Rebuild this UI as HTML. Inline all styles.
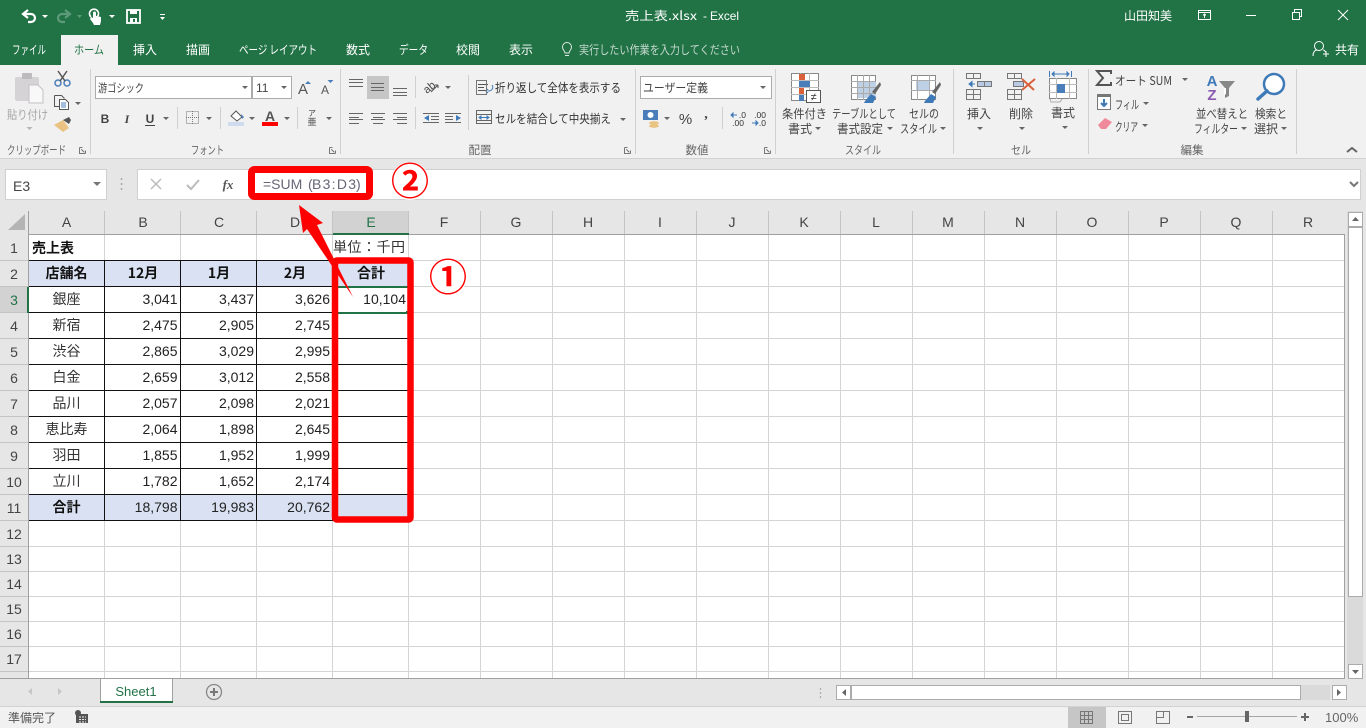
<!DOCTYPE html>
<html lang="ja"><head><meta charset="utf-8"><title>売上表.xlsx - Excel</title>
<style>
html,body{margin:0;padding:0;width:1366px;height:728px;overflow:hidden;background:#e6e6e6}
svg{display:block;position:absolute;left:0;top:0}
text{font-family:"Liberation Sans","Noto Sans CJK JP",sans-serif;font-size:12px;fill:#444}
.j{font-family:"Noto Sans CJK JP",sans-serif}
.m{text-anchor:middle}.e{text-anchor:end}
.w{fill:#fff}.s{font-size:11px}.g{fill:#666}
.c{font-size:14px;fill:#333}.n{font-size:14px;fill:#222;text-anchor:end}
.b{font-family:"Noto Sans CJK JP",sans-serif;font-size:14px;font-weight:700;fill:#111;text-anchor:middle}
.d{font-family:"Noto Sans CJK JP",sans-serif;font-size:14px;fill:#333;text-anchor:middle}
.h{font-size:14px;fill:#444;text-anchor:middle}
.ic{fill:none;stroke:#555;stroke-width:1}
.cr{shape-rendering:crispEdges}
.gl{font-size:11.500px;fill:#666;font-family:"Noto Sans CJK JP",sans-serif}
</style></head><body>
<svg width="1366" height="728" viewBox="0 0 1366 728">
<!-- title bar -->
<rect width="1366" height="65" fill="#217346"/>
<rect x="61" y="35" width="57" height="30" fill="#f1f1f1"/>
<path d="M28 10l-5 4 5 4M23 14h8a4 4 0 0 1 0 8h-3" fill="none" stroke="#fff" stroke-width="2.200"/>
<path d="M65 10l5 4-5 4M70 14h-8a4 4 0 0 0 0 8h3" fill="none" stroke="#5d9a7a" stroke-width="2.200"/>
<path d="M42 15h6l-3 3z" fill="#fff"/><path d="M77 15h5l-2.500 3z" fill="#5d9a7a"/>
<path d="M109 15h6l-3 3z" fill="#fff"/>
<path d="M93 23l-3-4 1-2 2 1v-5a1.500 1.500 0 0 1 3 0v3l5 1v4l-1 4h-6z" fill="#fff"/><path d="M91 17a4.500 4.500 0 1 1 6 0" fill="none" stroke="#fff" stroke-width="1.600"/>
<rect x="127" y="10" width="13" height="13" fill="none" stroke="#fff" stroke-width="1.800"/><rect x="130" y="10" width="7" height="4" fill="#fff"/><rect x="130" y="18" width="7" height="5" fill="#fff"/><rect x="133" y="19" width="2" height="3" fill="#217346"/>
<rect x="160" y="14" width="5" height="1" fill="#fff"/><path d="M160 17h5l-2.500 3z" fill="#fff"/>
<text x="625" y="20" class="w j" style="font-size:12px" textLength="72" lengthAdjust="spacingAndGlyphs">売上表.xlsx</text><text x="703" y="20" class="w">-</text><text x="710" y="20" class="w" textLength="29" lengthAdjust="spacingAndGlyphs">Excel</text>
<text x="1124" y="20" class="w j">山田知美</text>
<g fill="none" stroke="#fff" stroke-width="1" class="cr"><rect x="1198.500" y="10.500" width="12" height="9"/><path d="M1198 12.500h13M1204.500 18v-4M1203 15.500l1.500-1.500 1.500 1.500"/><path d="M1246 15.500h10M1292.500 12.500h7v7h-7zM1294.500 12v-2.500h7v7h-2"/></g>
<path d="M1338 10l10 10M1348 10l-10 10" stroke="#fff" stroke-width="1" fill="none"/>
<!-- tabs -->
<text x="12" y="54" class="w j" textLength="34" lengthAdjust="spacingAndGlyphs">ファイル</text>
<text x="74" y="54" class="j" style="fill:#217346" textLength="30" lengthAdjust="spacingAndGlyphs">ホーム</text>
<text x="145" y="54" class="m w j">挿入</text>
<text x="198" y="54" class="m w j">描画</text>
<text x="239" y="54" class="w j" textLength="78" lengthAdjust="spacingAndGlyphs">ページ レイアウト</text>
<text x="358" y="54" class="m w j">数式</text>
<text x="399" y="54" class="w j" textLength="29" lengthAdjust="spacingAndGlyphs">データ</text>
<text x="468" y="54" class="m w j">校閲</text>
<text x="521" y="54" class="m w j">表示</text>
<path d="M565 53c0-2-2.500-3-2.500-6a4.500 4.500 0 0 1 9 0c0 3-2.500 4-2.500 6zM565 55.500h4" fill="none" stroke="#dfe9e3" stroke-width="1"/>
<text x="579" y="54" class="j" style="fill:#c5d8cd" textLength="161" lengthAdjust="spacingAndGlyphs">実行したい作業を入力してください</text>
<circle cx="1319" cy="46" r="4.500" fill="none" stroke="#fff"/><path d="M1313 56c0-4 2-6 4-6M1323 50c1 0 2 1 2.500 2M1323 54h6M1326 51v6" fill="none" stroke="#fff"/>
<text x="1335" y="54" class="w j">共有</text>
<!-- ribbon -->
<rect y="65" width="1366" height="93" fill="#f1f1f1"/>
<rect y="158" width="1366" height="1" fill="#d2d2d2"/>
<g fill="#d0d0d0" class="cr"><rect x="90" y="69" width="1" height="85"/><rect x="340" y="69" width="1" height="85"/><rect x="635" y="69" width="1" height="85"/><rect x="775" y="69" width="1" height="85"/><rect x="953" y="69" width="1" height="85"/><rect x="1088" y="69" width="1" height="85"/><rect x="1296" y="69" width="1" height="85"/>
<rect x="177" y="107" width="1" height="22"/><rect x="220" y="107" width="1" height="22"/><rect x="297" y="107" width="1" height="22"/><rect x="415" y="76" width="1" height="22"/><rect x="415" y="107" width="1" height="22"/><rect x="468" y="75" width="1" height="55"/><rect x="722" y="107" width="1" height="22"/></g>
<!-- clipboard -->
<rect x="15" y="77" width="24" height="24" rx="2" fill="#d5d3d5"/><rect x="22" y="73" width="10" height="6" rx="1" fill="#bdbbbd"/>
<path d="M29 85h9l5 5v13H29z" fill="#f8f8f8" stroke="#c2c2c2"/>
<text x="7" y="119" class="j" style="fill:#a6a6a6" textLength="41" lengthAdjust="spacingAndGlyphs">貼り付け</text>
<path d="M26.500 127h6l-3 3z" fill="#b5b5b5"/>
<circle cx="58" cy="83" r="3" fill="none" stroke="#4a7ebb" stroke-width="1.500"/><circle cx="67" cy="83" r="3" fill="none" stroke="#4a7ebb" stroke-width="1.500"/><path d="M58 71l7 10M67 71l-7 10" stroke="#555" stroke-width="1.500"/>
<path d="M54.500 95.500h7l3 3v0M54.500 95.500v11h5" class="ic"/><path d="M59.500 99.500h6l3 3v7h-9z" fill="#fff" stroke="#555"/><path d="M61 103h5M61 105h5M61 107h5" stroke="#4a7ebb"/>
<path d="M75 102h6l-3 3z" fill="#666"/>
<path d="M54 125l9-5 6 8-6 4z" fill="#eac282"/><path d="M63 120l6-3 2 3-2 4z" fill="#555"/>
<text x="7" y="154" class="gl" textLength="59" lengthAdjust="spacingAndGlyphs">クリップボード</text>
<text x="191" y="154" class="gl" textLength="33" lengthAdjust="spacingAndGlyphs">フォント</text>
<text x="480" y="154" class="gl m">配置</text>
<text x="697" y="154" class="gl m">数値</text>
<text x="845" y="154" class="gl" textLength="36" lengthAdjust="spacingAndGlyphs">スタイル</text>
<text x="1011" y="154" class="gl" textLength="20" lengthAdjust="spacingAndGlyphs">セル</text>
<text x="1192" y="154" class="gl m">編集</text>
<g id="launch" fill="none" stroke="#777" class="cr"><path d="M79.500 147.500v6h6M79.500 147.500h3M85.500 153.500v-3M81.500 149.500l3 3"/><path d="M329.500 147.500v6h6M329.500 147.500h3M335.500 153.500v-3M331.500 149.500l3 3"/><path d="M624.500 147.500v6h6M624.500 147.500h3M630.500 153.500v-3M626.500 149.500l3 3"/><path d="M764.500 147.500v6h6M764.500 147.500h3M770.500 153.500v-3M766.500 149.500l3 3"/></g>
<path d="M1347 152l5-4 5 4" fill="none" stroke="#666" stroke-width="2"/>
<!-- font group -->
<rect x="95.500" y="76.500" width="156" height="22" fill="#fff" stroke="#ababab" class="cr"/><rect x="252.500" y="76.500" width="39" height="22" fill="#fff" stroke="#ababab" class="cr"/>
<text x="98" y="92" class="j" style="font-size:11.500px" textLength="46" lengthAdjust="spacingAndGlyphs">游ゴシック</text><text x="256" y="92" style="font-size:12px">11</text>
<path d="M242 86h6l-3 3zM281 86h6l-3 3z" fill="#666"/>
<text x="303" y="94" class="m" style="font-size:15px;fill:#555">A</text><path d="M305 84h6l-3-3z" fill="#4a7ebb"/>
<text x="325" y="94" class="m" style="font-size:12px;fill:#555">A</text><path d="M327.500 80h6l-3 3z" fill="#4a7ebb"/>
<text x="105" y="123" class="m" style="font-size:12px;font-weight:700;fill:#444">B</text>
<text x="127" y="123" class="m" style="font-size:12px;font-weight:700;font-style:italic;font-family:'Liberation Serif';fill:#444">I</text>
<text x="150" y="123" class="m" style="font-size:12px;font-weight:700;fill:#444">U</text><rect x="145" y="125" width="10" height="1" fill="#444"/>
<rect x="186.500" y="111.500" width="12" height="12" fill="none" stroke="#777" stroke-dasharray="1 1" class="cr"/><path d="M192.500 111v13M186 117.500h13" stroke="#777" stroke-dasharray="1 1" class="cr"/>
<path d="M231 116l5-5 6 6-5 4z" fill="#fff" stroke="#555"/><path d="M241 114l3 3-2 2z" fill="#4a7ebb"/><rect x="228" y="122" width="16" height="4" fill="#cfdcf0"/>
<text x="270" y="121" class="m" style="font-size:14px;font-weight:700;fill:#555">A</text><rect x="262" y="122" width="16" height="4" fill="#f00"/>
<text x="312" y="116" class="m" style="font-size:8px;fill:#444">ア</text><text x="312" y="125" class="m j" style="font-size:9px;fill:#444">亜</text>
<path d="M163 117h6l-3 3zM206 117h6l-3 3zM249 117h6l-3 3zM284 117h6l-3 3zM326 117h6l-3 3z" fill="#666"/>
<!-- alignment -->
<rect x="367" y="76" width="22" height="23" fill="#c6c6c6"/>
<path d="M349 79.500h14M349 82.500h14M349 86.500h14M371 83.500h13M371 87.500h13M371 90.500h13M393 88.500h14M393 92.500h14M393 95.500h14M349 113.500h14M349 117.500h10M349 119.500h14M349 123.500h10M371 113.500h14M373 117.500h10M371 119.500h14M373 123.500h10M393 113.500h14M397 117.500h10M393 119.500h14M397 123.500h10" stroke="#666" class="cr" fill="none"/>
<text x="429" y="91" class="m" transform="rotate(-40 429 87)" style="font-size:11px;fill:#444">ab</text><path d="M431 92l7-7M438 85v3M438 85h-3" stroke="#555" fill="none"/><path d="M445 86h6l-3 3z" fill="#666"/>
<path d="M431 116.500h8M431 119.500h8M423 113.500h16M423 122.500h16M445 113.500h16M445 122.500h16M445 116.500h8M445 119.500h8" stroke="#666" class="cr"/>
<path d="M429 115l-5 3 5 3zM429 118h-1" fill="#3f7ab8"/><path d="M456 115l5 3-5 3z" fill="#3f7ab8"/>
<path d="M478 84.500h10M478 87.500h6M478 90.500h8" stroke="#555"/><path d="M492 85c2 3 0 6-4 6M488 89l-2 2 2 2" stroke="#3f7ab8" fill="none"/><rect x="476.500" y="80.500" width="10" height="14" fill="none" stroke="#777"/>
<text x="495" y="92" class="j" textLength="126" lengthAdjust="spacingAndGlyphs" style="fill:#333">折り返して全体を表示する</text>
<rect x="476.500" y="110.500" width="15" height="13" fill="none" stroke="#666"/><path d="M476 114.500h16M476 120.500h16" stroke="#666"/><path d="M479 117.500h10M479 117.500l2-1.500v3zM489 117.500l-2-1.500v3z" stroke="#3f7ab8" fill="#3f7ab8"/>
<text x="495" y="123" class="j" textLength="116" lengthAdjust="spacingAndGlyphs" style="fill:#333">セルを結合して中央揃え</text>
<path d="M620 118h6l-3 3z" fill="#666"/>
<!-- number -->
<rect x="640.500" y="76.500" width="131" height="22" fill="#fff" stroke="#ababab" class="cr"/>
<text x="643" y="92" class="j" textLength="65" lengthAdjust="spacingAndGlyphs">ユーザー定義</text>
<path d="M760 86h6l-3 3z" fill="#666"/>
<rect x="643" y="110" width="15" height="10" fill="#4a7ebb"/><circle cx="650.500" cy="115" r="3" fill="#fff"/><ellipse cx="654" cy="123" rx="5" ry="1.800" fill="#eac282"/><ellipse cx="654" cy="126" rx="5" ry="1.800" fill="#eac282"/>
<path d="M664 117h6l-3 3z" fill="#666"/>
<text x="685.500" y="124" class="m" style="font-size:15px;fill:#444">%</text>
<text x="706" y="118" class="m" style="font-size:14px;font-weight:700;font-family:'Liberation Serif';fill:#444">,</text>
<text x="746" y="118" class="e" style="font-size:8.500px;fill:#333">.0</text><text x="744" y="126" class="e" style="font-size:8.500px;fill:#333">.00</text><path d="M731 115h6M731 115l2-2v4z" stroke="#3f7ab8" fill="#3f7ab8"/>
<text x="766" y="118" class="e" style="font-size:8.500px;fill:#333">.00</text><text x="766" y="126" class="e" style="font-size:8.500px;fill:#333">.0</text><path d="M752 123h6M758 123l-2-2v4z" stroke="#3f7ab8" fill="#3f7ab8"/>
<!-- styles -->
<rect x="791.500" y="73.500" width="27" height="27" fill="#fff" stroke="#888" class="cr"/>
<path d="M800.500 73v28M809.500 73v28M791 80.500h28M791 87.500h28M791 94.500h28" stroke="#bbb" class="cr"/>
<rect x="799" y="74" width="6" height="6" fill="#d9603b"/><rect x="799" y="81" width="11" height="6" fill="#4a7ebb"/><rect x="799" y="88" width="5" height="6" fill="#d9603b"/><rect x="799" y="95" width="5" height="6" fill="#4a7ebb"/>
<rect x="806.500" y="90.500" width="14" height="12" fill="#fff" stroke="#555" class="cr"/><text x="813.500" y="100.500" class="m" style="font-size:11px;fill:#333">≠</text>
<text x="782" y="118" class="j" textLength="45" lengthAdjust="spacingAndGlyphs">条件付き</text><text x="788" y="133" class="j" textLength="24" lengthAdjust="spacingAndGlyphs">書式</text><path d="M815 127h6l-3 3z" fill="#666"/>
<rect x="851.500" y="75.500" width="24" height="24" fill="#fff" stroke="#888" class="cr"/><rect x="858" y="81" width="18" height="17" fill="#bed0e6"/><path d="M857.500 75v25M863.500 75v25M869.500 75v25M851 81.500h25M851 87.500h25M851 93.500h25" stroke="#aaa" class="cr"/>
<path d="M865 101l6-7 5 3-3 6h-9z" fill="#3f7ab8"/><path d="M872 92l8-10 1 3-6 9z" fill="#666"/>
<text x="832" y="118" class="j" textLength="64" lengthAdjust="spacingAndGlyphs">テーブルとして</text><text x="837" y="133" class="j" textLength="46" lengthAdjust="spacingAndGlyphs">書式設定</text><path d="M887 127h6l-3 3z" fill="#666"/>
<rect x="911.500" y="75.500" width="24" height="24" fill="#fff" stroke="#888" class="cr"/><rect x="916" y="80" width="14" height="10" fill="#bed0e6"/><path d="M917.500 75v25M929.500 75v25M911 80.500h25M911 90.500h25" stroke="#aaa" class="cr"/>
<path d="M925 101l6-7 5 3-3 6h-9z" fill="#3f7ab8"/><path d="M932 92l8-10 1 3-6 9z" fill="#666"/>
<text x="909" y="118" class="j" textLength="30" lengthAdjust="spacingAndGlyphs">セルの</text><text x="900" y="133" class="j" textLength="37" lengthAdjust="spacingAndGlyphs">スタイル</text><path d="M940 127h6l-3 3z" fill="#666"/>
<!-- cells -->
<g fill="none" stroke="#777" class="cr"><rect x="966.500" y="73.500" width="14" height="5"/><path d="M973.500 73v5"/><rect x="966.500" y="89.500" width="14" height="10"/><path d="M973.500 89v11M966 94.500h15"/><rect x="977.500" y="81.500" width="14" height="5" fill="#b8cbe3"/><path d="M984.500 81v6"/>
<rect x="1007.500" y="73.500" width="14" height="5"/><path d="M1014.500 73v5"/><rect x="1007.500" y="89.500" width="14" height="10"/><path d="M1014.500 89v11M1007 94.500h15"/><rect x="1013.500" y="81.500" width="10" height="5" fill="#b8cbe3"/></g>
<path d="M969 84h6M969 84l3-2.500v5z" stroke="#3f7ab8" fill="#3f7ab8"/>
<path d="M1022 79l12 11M1035 79l-13 11" stroke="#d9603b" stroke-width="2" fill="none"/>
<text x="979" y="118" class="m j">挿入</text><path d="M977 127h6l-3 3z" fill="#666"/>
<text x="1021" y="118" class="m j">削除</text><path d="M1019 127h6l-3 3z" fill="#666"/>
<path d="M1049.500 71v6M1071.500 71v6M1052 74h17M1052 74l2-2v4zM1069 74l-2-2v4z" stroke="#3f7ab8" fill="none"/>
<rect x="1049.500" y="78.500" width="27" height="20" fill="#fff" stroke="#888" class="cr"/><path d="M1056.500 78v21M1069.500 78v21M1049 84.500h28M1049 92.500h28" stroke="#bbb" class="cr"/><rect x="1057" y="84" width="8" height="9" fill="#4a7ebb"/>
<path d="M1050 99l1 3h9l2-3" fill="none" stroke="#aaa"/>
<text x="1063" y="117" class="m j">書式</text><path d="M1062 126h6l-3 3z" fill="#666"/>
<!-- editing -->
<path d="M1111 74v-3h-14l6 7-6 7h14v-3" fill="none" stroke="#555" stroke-width="2"/>
<text x="1115" y="85" class="j" textLength="57" lengthAdjust="spacingAndGlyphs" style="fill:#444">オート SUM</text><path d="M1182 78h6l-3 3z" fill="#666"/>
<rect x="1097.500" y="95.500" width="13" height="14" fill="#fff" stroke="#777"/><rect x="1097" y="94" width="14" height="3" fill="#777"/><path d="M1104 99v7M1101 103l3 3 3-3" stroke="#3f7ab8" stroke-width="2" fill="none"/>
<text x="1115" y="109" class="j" style="fill:#444" textLength="24" lengthAdjust="spacingAndGlyphs">フィル</text><path d="M1143 102h6l-3 3z" fill="#666"/>
<path d="M1098 125l7-7 7 4-6 7h-5z" fill="#f08a9b"/>
<text x="1115" y="131" class="j" style="fill:#444" textLength="23" lengthAdjust="spacingAndGlyphs">クリア</text><path d="M1142 124h6l-3 3z" fill="#666"/>
<text x="1212" y="86" class="m" style="font-size:15px;font-weight:700;fill:#3f7ab8">A</text><text x="1212" y="100" class="m" style="font-size:15px;font-weight:700;fill:#8a5ab0">Z</text>
<path d="M1219 81h16l-6 7v8l-4 2v-10z" fill="#888"/><path d="M1225 88l-1 0v7l2-1v-6z" fill="#fff"/>
<circle cx="1274" cy="84" r="10" fill="#fff" stroke="#3f7ab8" stroke-width="2.500"/><path d="M1267 91l-9 8" stroke="#3f7ab8" stroke-width="3.500" stroke-linecap="round"/>
<text x="1196" y="118" class="j" textLength="52" lengthAdjust="spacingAndGlyphs">並べ替えと</text><text x="1194" y="133" class="j" textLength="44" lengthAdjust="spacingAndGlyphs">フィルター</text><path d="M1241 127h6l-3 3z" fill="#666"/>
<text x="1255" y="118" class="j" textLength="32" lengthAdjust="spacingAndGlyphs">検索と</text><text x="1254" y="133" class="j" textLength="24" lengthAdjust="spacingAndGlyphs">選択</text><path d="M1281 127h6l-3 3z" fill="#666"/>
<!-- formula bar -->
<rect y="159" width="1366" height="52" fill="#e6e6e6"/>
<rect x="5.500" y="169.500" width="101" height="30" fill="#fff" stroke="#d0d0d0" class="cr"/>
<text x="13" y="191" style="font-size:14px;fill:#444">E3</text><path d="M93 182h8l-4 4z" fill="#777"/>
<path d="M121.500 178v2M121.500 183v2M121.500 188v2" stroke="#aaa" stroke-width="1.500"/>
<rect x="137.500" y="169.500" width="1223" height="30" fill="#fff" stroke="#d0d0d0" class="cr"/>
<path d="M151 179l10 10M161 179l-10 10" stroke="#bbb" stroke-width="1.500" fill="none"/>
<path d="M187 185l4 4 8-9" stroke="#bbb" stroke-width="2" fill="none"/>
<text x="228" y="189" class="m" style="font-family:'Liberation Serif';font-style:italic;font-weight:700;font-size:13px;fill:#555">fx</text>
<text x="263" y="189" style="font-size:14px;fill:#667"><tspan>=SUM</tspan><tspan x="308">(</tspan><tspan x="312" textLength="44" lengthAdjust="spacing">B3:D3</tspan><tspan x="356">)</tspan></text>
<path d="M1350 182l4 4 4-4" fill="none" stroke="#777" stroke-width="2"/>
<!-- sheet -->
<rect x="29" y="235" width="1315" height="443" fill="#fff"/>
<rect x="333" y="211" width="76" height="23" fill="#d2d2d2"/>
<rect x="0" y="287" width="28" height="25" fill="#d2d2d2"/>
<path d="M8 230h17v-16z" fill="#b4b4b4"/>
<path class="cr" stroke="#d4d4d4" fill="none" d="M104.500 235V678M180.500 235V678M256.500 235V678M332.500 235V678M408.500 235V678M480.500 235V678M552.500 235V678M624.500 235V678M696.500 235V678M768.500 235V678M840.500 235V678M912.500 235V678M984.500 235V678M1056.500 235V678M1128.500 235V678M1200.500 235V678M1272.500 235V678M29 260.500H1344M29 286.500H1344M29 312.500H1344M29 338.500H1344M29 364.500H1344M29 390.500H1344M29 416.500H1344M29 442.500H1344M29 468.500H1344M29 494.500H1344M29 520.500H1344M29 546.500H1344M29 571.500H1344M29 596.500H1344M29 621.500H1344M29 646.500H1344M29 671.500H1344"/>
<path class="cr" stroke="#c4c4c4" fill="none" d="M104.500 211V234M180.500 211V234M256.500 211V234M332.500 211V234M408.500 211V234M480.500 211V234M552.500 211V234M624.500 211V234M696.500 211V234M768.500 211V234M840.500 211V234M912.500 211V234M984.500 211V234M1056.500 211V234M1128.500 211V234M1200.500 211V234M1272.500 211V234M0 260.500H28M0 286.500H28M0 312.500H28M0 338.500H28M0 364.500H28M0 390.500H28M0 416.500H28M0 442.500H28M0 468.500H28M0 494.500H28M0 520.500H28M0 546.500H28M0 571.500H28M0 596.500H28M0 621.500H28M0 646.500H28M0 671.500H28"/>
<rect x="29" y="261" width="379" height="25" fill="#d9e1f2"/><rect x="29" y="495" width="379" height="25" fill="#d9e1f2"/>
<path class="cr" stroke="#111" fill="none" d="M29 260.500H409M29 286.500H409M29 312.500H409M29 338.500H409M29 364.500H409M29 390.500H409M29 416.500H409M29 442.500H409M29 468.500H409M29 494.500H409M29 520.500H409M104.500 260V521M180.500 260V521M256.500 260V521M332.500 260V521M408.500 260V521"/>
<path class="cr" stroke="#a0a0a0" fill="none" d="M28.500 211V678M28 234.500H1344.500M1344.500 234V678.500M0 678.500H1345"/>
<rect x="333" y="233" width="76" height="2" fill="#217346"/>
<rect x="27" y="287" width="2" height="26" fill="#217346"/>
<rect x="333" y="286" width="76" height="2" fill="#217346"/><rect x="333" y="312" width="73" height="2" fill="#217346"/><rect x="406" y="311" width="3" height="3" fill="#217346"/>
<!-- col headers -->
<text x="66.500" y="227" class="h">A</text><text x="143" y="227" class="h">B</text><text x="219" y="227" class="h">C</text><text x="295" y="227" class="h">D</text><text x="371" y="227" class="h" style="fill:#217346">E</text><text x="444" y="227" class="h">F</text><text x="516" y="227" class="h">G</text><text x="588" y="227" class="h">H</text><text x="660" y="227" class="h">I</text><text x="732" y="227" class="h">J</text><text x="804" y="227" class="h">K</text><text x="876" y="227" class="h">L</text><text x="948" y="227" class="h">M</text><text x="1020" y="227" class="h">N</text><text x="1092" y="227" class="h">O</text><text x="1164" y="227" class="h">P</text><text x="1236" y="227" class="h">Q</text><text x="1308" y="227" class="h">R</text>
<!-- row headers -->
<text x="14" y="253" class="h">1</text><text x="14" y="279" class="h">2</text><text x="14" y="305" class="h" style="fill:#217346">3</text><text x="14" y="331" class="h">4</text><text x="14" y="357" class="h">5</text><text x="14" y="383" class="h">6</text><text x="14" y="409" class="h">7</text><text x="14" y="435" class="h">8</text><text x="14" y="461" class="h">9</text><text x="14" y="487" class="h">10</text><text x="14" y="513" class="h">11</text><text x="14" y="539" class="h">12</text><text x="14" y="564" class="h">13</text><text x="14" y="589" class="h">14</text><text x="14" y="614" class="h">15</text><text x="14" y="639" class="h">16</text><text x="14" y="664" class="h">17</text>
<!-- cells -->
<text x="32" y="253" class="b" style="text-anchor:start">売上表</text>
<text x="333" y="252" class="d" style="text-anchor:start" textLength="72" lengthAdjust="spacing">単位：千円</text>
<text x="66.500" y="278" class="b">店舗名</text><text x="143" y="278" class="b">12月</text><text x="219" y="278" class="b">1月</text><text x="295" y="278" class="b">2月</text><text x="371" y="278" class="b">合計</text>
<text x="66.500" y="304" class="d">銀座</text><text x="177.500" y="304" class="n">3,041</text><text x="254" y="304" class="n">3,437</text><text x="330" y="304" class="n">3,626</text><text x="406" y="304" class="n">10,104</text>
<text x="66.500" y="330" class="d">新宿</text><text x="177.500" y="330" class="n">2,475</text><text x="254" y="330" class="n">2,905</text><text x="330" y="330" class="n">2,745</text>
<text x="66.500" y="356" class="d">渋谷</text><text x="177.500" y="356" class="n">2,865</text><text x="254" y="356" class="n">3,029</text><text x="330" y="356" class="n">2,995</text>
<text x="66.500" y="382" class="d">白金</text><text x="177.500" y="382" class="n">2,659</text><text x="254" y="382" class="n">3,012</text><text x="330" y="382" class="n">2,558</text>
<text x="66.500" y="408" class="d">品川</text><text x="177.500" y="408" class="n">2,057</text><text x="254" y="408" class="n">2,098</text><text x="330" y="408" class="n">2,021</text>
<text x="66.500" y="434" class="d">恵比寿</text><text x="177.500" y="434" class="n">2,064</text><text x="254" y="434" class="n">1,898</text><text x="330" y="434" class="n">2,645</text>
<text x="66.500" y="460" class="d">羽田</text><text x="177.500" y="460" class="n">1,855</text><text x="254" y="460" class="n">1,952</text><text x="330" y="460" class="n">1,999</text>
<text x="66.500" y="486" class="d">立川</text><text x="177.500" y="486" class="n">1,782</text><text x="254" y="486" class="n">1,652</text><text x="330" y="486" class="n">2,174</text>
<text x="66.500" y="512" class="b">合計</text><text x="177.500" y="512" class="n">18,798</text><text x="254" y="512" class="n">19,983</text><text x="330" y="512" class="n">20,762</text>
<!-- v scroll -->
<rect x="1347" y="211" width="16" height="467" fill="#dadada"/>
<rect x="1348.500" y="212.500" width="14" height="14" fill="#fff" stroke="#ababab" class="cr"/><path d="M1352 221h7l-3.500-4z" fill="#666"/>
<rect x="1348.500" y="227.500" width="14" height="369" fill="#fff" stroke="#ababab" class="cr"/>
<rect x="1348.500" y="664.500" width="14" height="14" fill="#fff" stroke="#ababab" class="cr"/><path d="M1352 670h7l-3.500 4z" fill="#666"/>
<!-- tabs strip -->
<rect x="0" y="679" width="1366" height="27" fill="#e6e6e6"/>
<path d="M32 688v7l-4-3.500zM58 688v7l4-3.500z" fill="#c6c6c6"/>
<path d="M100.500 702V678.500M172.500 678.500V702" stroke="#a0a0a0" class="cr"/>
<rect x="101" y="679" width="71" height="22" fill="#fff"/><rect x="100" y="701" width="73" height="2" fill="#217346"/>
<text x="136" y="696" class="m" style="font-size:13px;fill:#217346">Sheet1</text>
<circle cx="214" cy="692" r="7.500" fill="none" stroke="#888" stroke-width="1.300"/><path d="M210 692h8M214 688v8" stroke="#777" stroke-width="2"/>
<path d="M820.500 688v2M820.500 692v2M820.500 696v2" stroke="#aaa" stroke-width="1.200"/>
<rect x="836.500" y="685.500" width="14" height="14" fill="#fff" stroke="#ababab" class="cr"/><path d="M846 689v7l-4-3.500z" fill="#666"/>
<rect x="851" y="685" width="479" height="15" fill="#dadada"/><rect x="851.500" y="685.500" width="449" height="14" fill="#fff" stroke="#ababab" class="cr"/>
<rect x="1332.500" y="685.500" width="14" height="14" fill="#fff" stroke="#ababab" class="cr"/><path d="M1337 689v7l4-3.500z" fill="#666"/>
<!-- status -->
<rect y="706" width="1366" height="22" fill="#f1f1f1"/><rect y="706" width="1366" height="1" fill="#d2d2d2"/>
<text x="8" y="722" class="j" style="fill:#555">準備完了</text>
<circle cx="78" cy="713" r="3" fill="#555"/><rect x="76" y="714" width="12" height="9" fill="#555"/><path d="M79 717h7M79 719.500h7M79 722h7" stroke="#f1f1f1" stroke-dasharray="2 1"/>
<rect x="1068" y="707" width="38" height="21" fill="#c6c6c6"/>
<path class="cr" fill="none" stroke="#777" d="M1080.500 711.500h12v12h-12zM1084.500 711v12M1088.500 711v12M1080 715.500h12M1080 719.500h12M1118.500 711.500h13v12h-13zM1121.500 714.500h7v6h-7zM1156.500 711.500h13v12h-13zM1163.500 711v6.500h-7"/>
<rect x="1187" y="716" width="6" height="2" fill="#666"/>
<rect x="1197" y="716" width="100" height="1" fill="#a6a6a6"/><rect x="1245" y="711" width="4" height="11" fill="#666"/>
<path d="M1301 717h8M1305 713v8" stroke="#666" stroke-width="2"/>
<text x="1325" y="722" style="font-size:13px;fill:#666">100%</text>
<!-- annotations -->
<rect x="251.500" y="169.500" width="118" height="27" rx="3" fill="none" stroke="#f00" stroke-width="7"/>
<rect x="335" y="260.500" width="75.500" height="259" rx="2" fill="none" stroke="#f00" stroke-width="6.500"/>
<path d="M299 205l24 18-6 2 36 72-46-68-4 4z" fill="#f00"/>
<circle cx="410" cy="181" r="19" fill="#fff"/><circle cx="448" cy="277" r="19" fill="#fff"/>
<text x="410" y="195" class="m j" style="font-size:38px;font-weight:700;fill:#f00">②</text>
<text x="448" y="291" class="m j" style="font-size:38px;font-weight:700;fill:#f00">①</text>
</svg>
</body></html>
